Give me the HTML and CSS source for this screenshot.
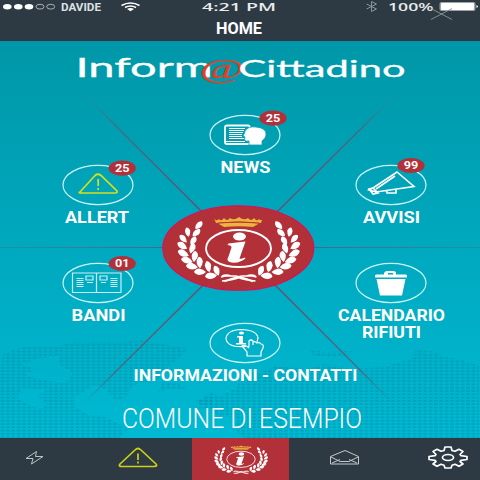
FILE: index.html
```html
<!DOCTYPE html>
<html lang="it">
<head>
<meta charset="utf-8">
<title>Inform@Cittadino</title>
<link rel="stylesheet" href="styles.css">
</head>
<body>
<svg class="defs" aria-hidden="true">
  <defs>
    <path id="leaf" d="M-6 0Q-3-4 2-3.500Q5-2.500 6-1Q5 2.500 1 3Q-3 2.500-6 0Z"/>
    <g id="laurel" fill="#fff">
      <use href="#leaf" transform="translate(199 225.500) rotate(-45) scale(.85)"/>
      <use href="#leaf" transform="translate(188 232) rotate(-100) scale(.8)"/>
      <use href="#leaf" transform="translate(196.500 233) rotate(-40) scale(.85)"/>
      <use href="#leaf" transform="translate(183.500 238.500) rotate(-130) scale(.85)"/>
      <use href="#leaf" transform="translate(193.500 241) rotate(-60) scale(.85)"/>
      <use href="#leaf" transform="translate(182.500 245.500) rotate(-145) scale(.95)"/>
      <use href="#leaf" transform="translate(192.500 248.500) rotate(-70) scale(.9)"/>
      <use href="#leaf" transform="translate(183.500 253) rotate(-152)"/>
      <use href="#leaf" transform="translate(195 256.500) rotate(-80) scale(.95)"/>
      <use href="#leaf" transform="translate(187 260) rotate(-160)"/>
      <use href="#leaf" transform="translate(200 262.500) rotate(-92) scale(.95)"/>
      <use href="#leaf" transform="translate(192 266) rotate(-168)"/>
      <use href="#leaf" transform="translate(208.500 266.500) rotate(-100) scale(.95)"/>
      <use href="#leaf" transform="translate(200 271.500) rotate(-176)"/>
      <use href="#leaf" transform="translate(217 270.500) rotate(-110) scale(.9)"/>
      <use href="#leaf" transform="translate(211 275.500) rotate(178)"/>
      <path d="M221 277q14-4 32 4.500M222 281q12-1 18-4M222 276q4-2 9 0" fill="none" stroke="#fff" stroke-width="1.500"/>
    </g>
    <g id="emblem">
      <path d="M214 218q2 4 5 1q2 3 5-1q3 4 6 0q4 3 9-1q5 4 9 1q3 4 6 0q3 4 5 1q3 3 4-1l-2 5q-22-3-45 0z" fill="#edb33c"/>
      <path d="M218 223.500q20-2 41 0l-6 3.500q-14-1.500-29 0z" fill="#edb33c"/>
      <path d="M218 223q20-2 41 0" stroke="#b23038" stroke-width=".8" fill="none"/>
      <use href="#laurel"/>
      <use href="#laurel" transform="translate(477.500 0) scale(-1 1)"/>
      <ellipse cx="238.500" cy="248.500" rx="32.500" ry="18.500" fill="none" stroke="#fff" stroke-width="1.900"/>
      <ellipse cx="239.500" cy="236.500" rx="6.500" ry="4" fill="#fff"/>
      <path d="M228.500 243.500q8-1 17-2l-6 17q2 1 5-1l1 1q-6 5-14 4q-6-1-3-6l3-9q0-2.500-4-2.500z" fill="#fff"/>
    </g>
  </defs>
</svg>
<div class="app">
  <header class="top">
    <svg viewBox="0 0 480 41" width="480" height="41" fill="#fff">
      <ellipse cx="7.300" cy="6.700" rx="4.300" ry="2.700"/><ellipse cx="18.300" cy="6.700" rx="4.300" ry="2.700"/><ellipse cx="29" cy="6.700" rx="4.300" ry="2.700"/>
      <g fill="none" stroke="#c5cacd" stroke-width=".8"><ellipse cx="40" cy="6.700" rx="4" ry="2.400"/><ellipse cx="50.700" cy="6.700" rx="4" ry="2.400"/></g>
      <text class="bold soft" x="61" y="10.700" font-size="11" textLength="40" lengthAdjust="spacingAndGlyphs">DAVIDE</text>
      <g fill="none" stroke="#fff" stroke-width="1.500"><path d="M121.500 5.500q9-5 18 0M125 7.500q5.500-3 11 0"/></g><path d="M127 9q3.500-2 7 0l-3.500 2.200z"/>
      <text class="status" x="202" y="11" font-size="11.500" textLength="74" lengthAdjust="spacingAndGlyphs">4:21 PM</text>
      <path d="M366.500 4l10 5-5 2.500V1.500l5 2.500-10 5" fill="none" stroke="#89949a" stroke-width="1"/>
      <text class="status" x="388" y="10.900" font-size="11.500" textLength="45.500" lengthAdjust="spacingAndGlyphs">100%</text>
      <rect x="439.500" y="2" width="36" height="9" rx="2" fill="#9aa3a8"/><rect x="441" y="3" width="33" height="7" rx="1"/><path d="M476.500 5q3 1.500 0 3z"/>
      <path d="M431 8.500l21 11M431 19.500l21-11" fill="none" stroke="#8b959b" stroke-width=".9"/>
      <text class="bold" x="216" y="33.500" font-size="16" textLength="46" lengthAdjust="spacingAndGlyphs">HOME</text>
    </svg>
  </header>

  <main class="home">
    <svg class="backdrop" viewBox="0 41 480 397" width="480" height="397">
      <defs>
        <pattern id="dots" width="5.350" height="3.300" patternUnits="userSpaceOnUse"><rect x=".6" y=".7" width="3.800" height="1.800" rx=".7" fill="#008fa8" fill-opacity=".5"/></pattern>
        <radialGradient id="fade" gradientUnits="userSpaceOnUse" cx="239" cy="249" r="218"><stop offset=".3" stop-color="#71486a"/><stop offset=".8" stop-color="#4d6880"/><stop offset="1" stop-color="#3a8095" stop-opacity=".1"/></radialGradient>
        <linearGradient id="axis" gradientUnits="userSpaceOnUse" x1="0" y1="0" x2="480" y2="0"><stop offset="0" stop-color="#2d8398" stop-opacity=".6"/><stop offset=".35" stop-color="#4d6880"/><stop offset=".65" stop-color="#4d6880"/><stop offset="1" stop-color="#2d8398" stop-opacity=".6"/></linearGradient>
      </defs>
      <g fill="url(#dots)">
        <path fill-rule="evenodd" d="M3 354l20-7h35l12-5h58l10-3 20 4 30 6-8 8-12 10-3 10-18 5-14 3-8 13-8 3-14-13-9-3-14 9-7 4 2 9 14 8 16 2 16 8 6 5-8 8-22 8-15 12H0v-84zM40 358l20-3-3 8 16 10-8 10-20-3-20-4 10-7-14-5zM22 388l24 2-8 6 10 10-10 3-20-10z"/>
        <path d="M310 350l15 2 28-1-6 6-20 0-14-2zM415 349l14 2 13 2-8 5-20-2zM345 369l40-2 14-5 10-2 10-6 40 5 20 7v72H245l-12-8 5-11-22-5-8-8-13-2 15-12 10 4 16-7 6-14 20-3 14-6 30 3 20-5z"/>
        <path d="M163 381l15 2 8 6-18 0-10 4zM196 400l18-4-3 12-14 1z"/>
      </g>
      <g stroke="url(#fade)" stroke-width="1.200" fill="none">
        <path d="M87 97L393 403M393 97L84 403"/>
      </g>
      <rect y="247" width="165" height="1" fill="url(#axis)"/><rect x="312" y="247" width="168" height="1" fill="url(#axis)"/>
    </svg>

    <h1 class="brand">
      <svg viewBox="0 50 480 40" width="480" height="40" fill="#fff">
        <text class="logo" x="75.500" y="76.500" font-size="26.500" textLength="137" lengthAdjust="spacingAndGlyphs">Inform</text>
        <text class="at" x="199" y="77.500" font-size="27" textLength="45" lengthAdjust="spacingAndGlyphs">@</text>
        <text class="logo" x="238.500" y="76.500" font-size="24" textLength="167" lengthAdjust="spacingAndGlyphs">Cittadino</text>
      </svg>
    </h1>

    <div class="menu">
      <div class="col side">
        <a class="tile">
          <svg class="icon" viewBox="-38 -27 80 50"><ellipse class="ring" rx="35" ry="19.600"/>
            <path d="M-18 7L-3-9.500Q0-12 3-9.500L19 6Q20 8 17 8H-17Q-20 8-18 7ZM.2-6v7M.2 3v2" fill="none" stroke="#d5e01d" stroke-width="1.700"/>
            <ellipse class="badge" cx="24.200" cy="-16.800" rx="13.600" ry="7.600"/><text class="num" x="17" y="-13" textLength="14.500" lengthAdjust="spacingAndGlyphs">25</text></svg>
          <svg class="label" width="68" height="20"><text x="1" y="14" textLength="64" lengthAdjust="spacingAndGlyphs">ALLERT</text></svg>
        </a>
        <a class="tile">
          <svg class="icon" viewBox="-38 -27 80 50"><ellipse class="ring" rx="35" ry="19.600"/>
            <g fill="none" stroke="#c9f1f5"><path d="M-25.500-10H23V9.500H-25.500ZM-1.500-10V9.500M-12-7h7v4h-7zM2-7h7v4H2z" stroke-width="1.200"/><path d="M-21.500-4.500h7m-7 2h7m-7 2h7m-7 2h7m-7 2h7M12.500-4.500h7m-7 2h7m-7 2h7m-7 2h7m-7 2h7M-11-.5h6M3-.5h5" stroke-width="1.100"/></g>
            <ellipse class="badge" cx="24.200" cy="-19.500" rx="13.600" ry="7.600"/><text class="num" x="17" y="-15.700" textLength="14.500" lengthAdjust="spacingAndGlyphs">01</text></svg>
          <svg class="label" width="56" height="20"><text x="1.500" y="14" textLength="54" lengthAdjust="spacingAndGlyphs">BANDI</text></svg>
        </a>
      </div>

      <div class="col middle">
        <a class="tile">
          <svg class="icon" viewBox="-38 -27 80 50"><ellipse class="ring" rx="35" ry="19.600"/>
            <rect x="-20" y="-9.500" width="25" height="18.500" rx="2" fill="none" stroke="#fff" stroke-width="1.800"/><path d="M-16-6.500H0m-16 2H-1m-15 2H-2m-14 2H-3m-13 2H-3m-13 2H-1M-20 6.500H0" stroke="#fff"/>
            <path d="M4 10V6Q-2 7 0 2L-2 1Q0-2 0-4Q3-9 11-8Q22-7 21 0Q21 3 17 6V10Z" fill="#fff" stroke="#0a9fb2" stroke-width=".8"/>
            <ellipse class="badge" cx="28" cy="-16.800" rx="13.600" ry="7.600"/><text class="num" x="20.800" y="-13" textLength="14.500" lengthAdjust="spacingAndGlyphs">25</text></svg>
          <svg class="label" width="52" height="20"><text x="1.500" y="14" textLength="50" lengthAdjust="spacingAndGlyphs">NEWS</text></svg>
        </a>
        <svg class="hub" viewBox="162 204 153 88" width="153" height="88"><ellipse cx="238.300" cy="248" rx="75.500" ry="42.300" fill="#b23038" stroke="#e5085a" stroke-width="1.100"/><use href="#emblem"/></svg>
        <a class="tile info">
          <svg class="icon" viewBox="-38 -27 80 50"><ellipse class="ring" rx="35" ry="19.600"/>
            <g fill="none" stroke="#fff" stroke-width="1.200"><path d="M1 3.500Q-18 5-19-4.500Q-18-13-4-13.500Q12-13 13-5L12-1"/><path d="M4 4V-2Q6-4 8-2V2V-1Q10-2 12 0Q15-1 16 1Q19 1 18 5L16 9V13H2V9L-3 3Q0 1 4 5"/></g>
            <ellipse cx="-3.500" cy="-10" rx="2.500" ry="1.500" fill="#fff"/><path d="M-8-7h6V0h3v1.500H-9V0h3V-5.500h-2z" fill="#fff"/></svg>
          <svg class="label" width="226" height="20"><text x="1.500" y="14" textLength="224" lengthAdjust="spacingAndGlyphs">INFORMAZIONI - CONTATTI</text></svg>
        </a>
        <svg class="town" width="246" height="36"><text x="3" y="27" textLength="240" lengthAdjust="spacingAndGlyphs">COMUNE DI ESEMPIO</text></svg>
      </div>

      <div class="col side">
        <a class="tile">
          <svg class="icon" viewBox="-38 -27 80 50"><ellipse class="ring" rx="35" ry="19.600"/>
            <g fill="none" stroke="#fff" stroke-width="1.600"><path d="M6-13L23 1.500L-15 7L-22 5L-18 3ZM-22 4l4-1 5 5-5 1zM-15 4L4-9M-4 6v2h9v-3"/></g>
            <ellipse class="badge" cx="20" cy="-19.500" rx="13.600" ry="7.600"/><text class="num" x="12.800" y="-15.700" textLength="14.500" lengthAdjust="spacingAndGlyphs">99</text></svg>
          <svg class="label" width="58" height="20"><text x="1" y="14" textLength="57" lengthAdjust="spacingAndGlyphs">AVVISI</text></svg>
        </a>
        <a class="tile">
          <svg class="icon" viewBox="-38 -27 80 50"><ellipse class="ring" rx="35" ry="19.600"/>
            <path d="M-16-7.500Q-16-8.500-14-8.500H-7V-10Q-6-12-4-12H2Q5-12 5-10V-8.500H14Q16-8.500 16-7.500V-5.500H-16ZM-3-10V-8.500H2V-10ZM-14.500-4H14.500L11 12.500H-11Z" fill="#fff"/></svg>
          <svg class="label" width="110" height="36"><text x="2" y="14" textLength="107" lengthAdjust="spacingAndGlyphs">CALENDARIO</text><text x="26" y="30.500" textLength="59" lengthAdjust="spacingAndGlyphs">RIFIUTI</text></svg>
        </a>
      </div>
    </div>
  </main>

  <nav class="tabs">
    <a class="tab bolt"><svg viewBox="0 438 68 42" width="68" height="42"><path d="M36.500 451.500L26 458.500H33L31.500 464L43 456.500H35.500Z" fill="none" stroke="#bdc3c7" stroke-width="1"/></svg></a>
    <a class="tab warn"><svg viewBox="110 438 56 42" width="56" height="42"><path d="M120 464L135 450Q138 447 141 450L156 464Q158 466 154 466.500H122Q118 466.500 120 464ZM138 453.500v6.500M138 461.500v2" fill="none" stroke="#cdd014" stroke-width="1.700"/></svg></a>
    <a class="tab active"><svg viewBox="130 200 217 98" width="96" height="43"><use href="#emblem"/></svg></a>
    <a class="tab mail"><svg viewBox="310 438 70 42" width="70" height="42"><path d="M330.500 456.500L345 450.500L358.500 456.500V464H330.500ZM331 457l9 4.500h9l9-4.500M332 463l8-3.500M357 463l-8-3.500" fill="none" stroke="#c4c9cc" stroke-width="1"/></svg></a>
    <a class="tab gear"><svg viewBox="420 438 56 42" width="56" height="42"><g fill="none" stroke="#fff" stroke-width="1.700" stroke-linejoin="round"><path d="M445 447h6l1 3.500 3 .8 4-2 4 2.200-3 3 1 1.200 6 .8v3l-6 .8-1 1.200 3 2.500-4 2.300-4-2-3 1-1 2.700h-6l-1-2.700-3-1-4 2-4-2.300 3-2.500-1-1.200-6-.8v-3l6-.8 1-1.200-3-3 4-2.200 4 2 3-.8z"/><ellipse cx="448" cy="457.500" rx="5.500" ry="3"/></g></svg></a>
  </nav>
</div>
</body>
</html>
```
FILE: styles.css
```css
body { margin: 0; font-family: Roboto, "Liberation Sans", sans-serif; }
svg { display: block; flex: none; overflow: visible; }
.defs { position: absolute; width: 0; height: 0; overflow: hidden; }
.app { width: 480px; height: 480px; display: flex; flex-direction: column; overflow: hidden; }
.top { height: 40.500px; background: #2e3a43; flex: none; }
.bold { font-weight: 700; }
.soft { fill: #dde1e3; }
.status { font-family: "Open Sans", Roboto, sans-serif; font-weight: 600; fill: #e8ebec; }
.home { position: relative; height: 397.500px; flex: none; background: linear-gradient(#0097a8, #00b9d3); }
.backdrop { position: absolute; inset: 0; }
.brand { position: relative; margin: 0; padding-top: 9.500px; height: 40px; }
.logo { font-family: Lato, sans-serif; font-weight: 400; stroke: #fff; stroke-width: .3; }
.at { font-family: "Liberation Serif", serif; font-style: italic; font-weight: 400; fill: #dd4126; stroke: #dd4126; stroke-width: .3; }
.menu { position: relative; display: grid; grid-template-columns: 146px 148px 144px; padding-left: 25px; }
.col { display: flex; flex-direction: column; align-items: center; min-width: 0; }
.side { padding-top: 68px; gap: 28px; }
.middle { padding-top: 18px; }
.tile { display: flex; flex-direction: column; align-items: center; height: 70px; flex: none; }
.icon { width: 80px; height: 50px; margin-left: 4px; }
.info .icon { margin-left: 3px; }
.ring { fill: none; stroke: #ccf4f7; stroke-width: 1.200; }
.badge { fill: #b2303a; }
.num { font-size: 10.500px; font-weight: 700; fill: #fff; }
.label { fill: #fff; font-size: 17px; font-weight: 700; margin-top: 1px; }
.hub { margin: 26px 14px 24px 0; }
.town { margin-top: 15px; margin-right: 6px; fill: #fff; font-size: 27px; font-weight: 300; }
.tabs { height: 42px; position: relative; display: flex; background: #2e3a43; flex: none; }
.tab { display: flex; align-items: center; }
.bolt { width: 68px; margin-right: 42px; }
.warn { width: 56px; margin-right: 26px; }
.active { width: 97px; height: 42px; justify-content: center; margin-right: 21px; background: #b23038; }
.mail { width: 70px; margin-right: 40px; }
.gear { width: 60px; }
```
